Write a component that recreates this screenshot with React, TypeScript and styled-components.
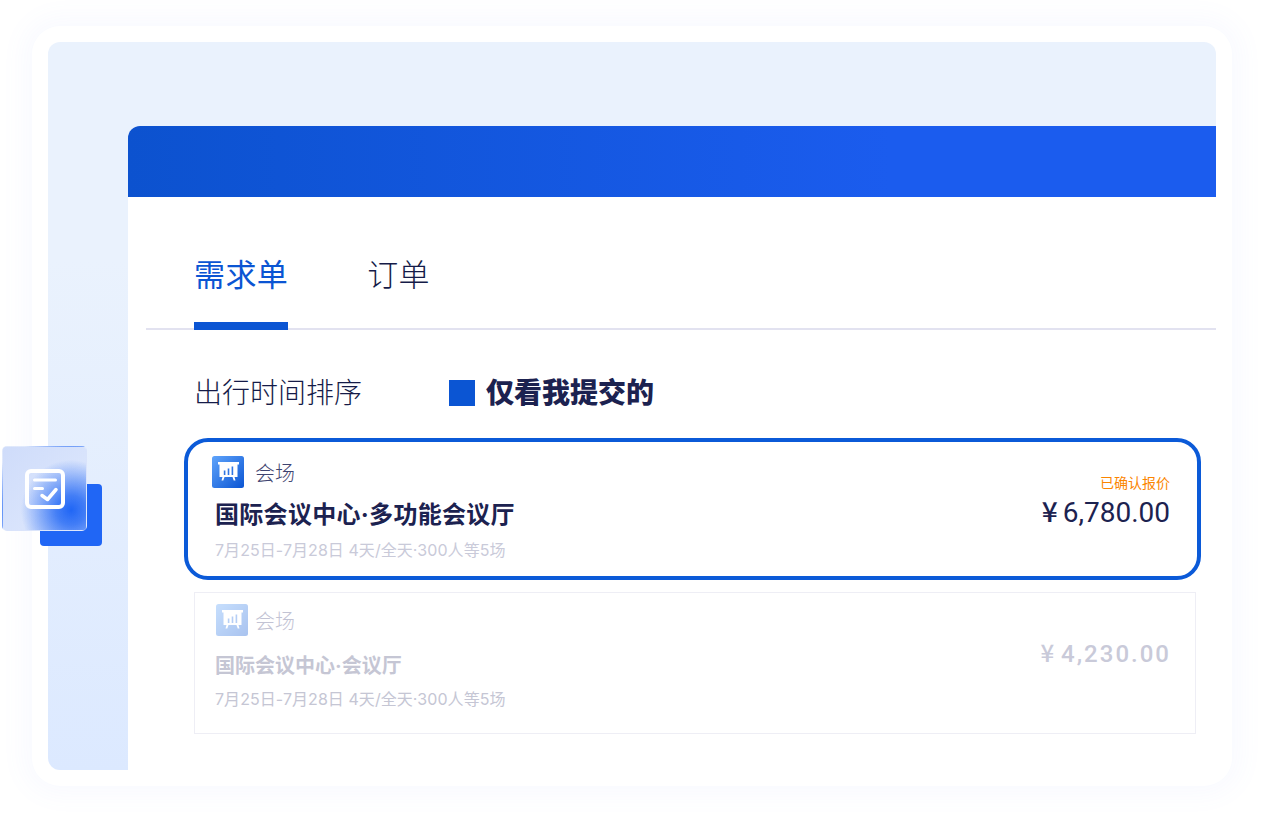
import React from "react";
import styled, { createGlobalStyle } from "styled-components";

const GlobalStyle = createGlobalStyle`
  html, body {
    margin: 0;
    padding: 0;
    background: #fff;
  }
  body {
    font-family: "Inter", "Noto Sans CJK SC", sans-serif;
    color: #1c2250;
  }
  * {
    box-sizing: border-box;
  }
`;

const VenueIcon = ({ id }: { id: string }) => (
  <svg width="32" height="32" viewBox="0 0 32 32">
    <defs>
      <linearGradient id={id} x1="0" y1="0" x2="1" y2="1">
        <stop offset="0" stopColor="#5fa4fb" />
        <stop offset="1" stopColor="#0b55d3" />
      </linearGradient>
    </defs>
    <rect width="32" height="32" rx="2.500" fill={`url(#${id})`} />
    <path d="M6 6h21v2.500h-1.500V21h-18V8.500H6z" fill="#fff" />
    <path d="M10.500 21l-1 3.500h1.800l1.200-3.500zM22.500 21l1 3.500h-1.800L20.500 21z" fill="#fff" />
    <path d="M11.800 14.500h1.600v4.500h-1.600zM15.700 12.500h1.600V19h-1.600zM19.600 10.500h1.600V19h-1.600z" fill="#2f76e3" />
  </svg>
);

const Page = () => (
  <Stage>
    <Card>
      <Panel>
        <Sheet>
          <Banner />
          <TabBar>
            <Tab $active>需求单</Tab>
            <Tab>订单</Tab>
          </TabBar>
          <FilterRow>
            <SortLabel>出行时间排序</SortLabel>
            <CheckBox />
            <CheckLabel>仅看我提交的</CheckLabel>
          </FilterRow>
          <SelectedItem>
            <ItemInfo>
              <ItemType>
                <VenueIcon id="venue-a" />
                <TypeName>会场</TypeName>
              </ItemType>
              <ItemTitle>国际会议中心·多功能会议厅</ItemTitle>
              <ItemMeta>7月25日-7月28日 4天/全天·300人等5场</ItemMeta>
            </ItemInfo>
            <PriceBox>
              <PriceNote>已确认报价</PriceNote>
              <Price>
                <Yen>¥</Yen>6,780.00
              </Price>
            </PriceBox>
          </SelectedItem>
          <MutedItem>
            <ItemInfo>
              <MutedType>
                <MutedIcon>
                  <VenueIcon id="venue-b" />
                </MutedIcon>
                <TypeName>会场</TypeName>
              </MutedType>
              <MutedTitle>国际会议中心·会议厅</MutedTitle>
              <MutedMeta>7月25日-7月28日 4天/全天·300人等5场</MutedMeta>
            </ItemInfo>
            <MutedPrice>
              <Yen>¥</Yen>4,230.00
            </MutedPrice>
          </MutedItem>
        </Sheet>
      </Panel>
    </Card>
    <FloatBadge>
      <BadgeBack />
      <BadgeGlass>
        <svg width="40" height="40" viewBox="0 0 40 40" fill="none">
          <rect x="2" y="2" width="36" height="36" rx="4" stroke="#fff" strokeWidth="4" />
          <path d="M9.500 11h21M9.500 19.500h8" stroke="#fff" strokeWidth="3" strokeLinecap="round" />
          <path d="M17 26.500l5.500 4L31 20.500" stroke="#fff" strokeWidth="3.500" strokeLinecap="round" strokeLinejoin="round" />
        </svg>
      </BadgeGlass>
    </FloatBadge>
  </Stage>
);

const App = () => (
  <>
    <GlobalStyle />
    <Page />
  </>
);

export default App;

const Stage = styled.div`
  position: relative;
  width: 1262px;
  height: 820px;
  padding: 26px 30px 34px 32px;
  overflow: hidden;
`;

const Card = styled.div`
  width: 1200px;
  height: 760px;
  padding: 16px;
  background: #fff;
  border-radius: 28px;
  box-shadow: 0 0 24px 10px rgba(120, 130, 255, 0.045);
`;

const Panel = styled.div`
  height: 728px;
  padding: 84px 0 0 80px;
  border-radius: 12px 12px 0 12px;
  background: linear-gradient(180deg, #eaf2fd 0%, #eaf2fd 30%, #dce9ff 100%);
`;

const Sheet = styled.div`
  height: 644px;
  background: #fff;
  border-top-left-radius: 12px;
  overflow: hidden;
`;

const Banner = styled.div`
  height: 71px;
  background: linear-gradient(90deg, #0c52cf 0%, #1b5cee 70%);
`;

const TabBar = styled.div`
  display: flex;
  align-items: flex-end;
  gap: 79px;
  height: 133px;
  margin-left: 18px;
  padding-left: 48px;
  border-bottom: 2px solid #e2e2f0;
`;

const Tab = styled.div<{ $active?: boolean }>`
  height: 78px;
  margin-bottom: -2px;
  font-size: 31px;
  line-height: 46px;
  font-weight: ${(p) => (p.$active ? 400 : 300)};
  letter-spacing: 0.4px;
  color: ${(p) => (p.$active ? "#0b55d3" : "#151b48")};
  border-bottom: 8px solid ${(p) => (p.$active ? "#0b55d3" : "transparent")};
`;

const FilterRow = styled.div`
  display: flex;
  align-items: center;
  height: 38px;
  margin: 44px 0 0 66px;
`;

const SortLabel = styled.div`
  width: 255px;
  font-size: 28px;
  line-height: 38px;
  font-weight: 300;
  color: #151b48;
`;

const CheckBox = styled.div`
  width: 26px;
  height: 26px;
  margin-right: 11px;
  background: #0b55d3;
`;

const CheckLabel = styled.div`
  font-size: 28px;
  line-height: 38px;
  font-weight: 900;
`;

const SelectedItem = styled.div`
  display: flex;
  justify-content: space-between;
  width: 1017px;
  height: 142px;
  margin: 26px 0 0 56px;
  padding: 14px 27px 0 24px;
  border: 4px solid #0b5ad8;
  border-radius: 24px;
`;

const MutedItem = styled.div`
  display: flex;
  justify-content: space-between;
  width: 1002px;
  height: 142px;
  margin: 12px 0 0 66px;
  padding: 11px 25px 0 21px;
  border: 1px solid #eeeef5;
`;

const ItemInfo = styled.div`
  display: flex;
  flex-direction: column;
`;

const ItemType = styled.div`
  display: flex;
  align-items: center;
  gap: 11px;
  height: 32px;
`;

const MutedType = styled(ItemType)`
  gap: 7px;
`;

const MutedIcon = styled.div`
  display: flex;
  opacity: 0.35;
`;

const TypeName = styled.span`
  font-size: 20px;
  font-weight: 300;
  color: #3f4470;
  ${MutedItem} & {
    color: #c2c3d4;
  }
`;

const ItemTitle = styled.div`
  margin: 9px 0 0 3px;
  font-size: 24px;
  line-height: 36px;
  font-weight: 700;
  letter-spacing: 0.3px;
`;

const MutedTitle = styled.div`
  margin: 12px 0 0 -1px;
  font-size: 20px;
  line-height: 36px;
  font-weight: 700;
  color: #c5c6d4;
`;

const ItemMeta = styled.div`
  margin: 5px 0 0 3px;
  font-size: 16px;
  line-height: 24px;
  letter-spacing: 0.06px;
  color: #c9cad9;
`;

const MutedMeta = styled(ItemMeta)`
  margin: 3px 0 0 -1px;
  color: #c5c6d4;
`;

const PriceBox = styled.div`
  display: flex;
  flex-direction: column;
  align-items: flex-end;
  padding-top: 17px;
`;

const PriceNote = styled.div`
  font-size: 14px;
  line-height: 20px;
  color: #fb8500;
`;

const Price = styled.div`
  margin-top: -2px;
  font-family: "Roboto", "Noto Sans CJK SC", sans-serif;
  font-size: 28px;
  line-height: 38px;
  font-weight: 400;
`;

const Yen = styled.span`
  margin-right: 5px;
  font-family: "Noto Sans CJK SC", sans-serif;
  font-weight: 500;
`;

const MutedPrice = styled.div`
  margin: 31px -1px 0 0;
  font-family: "Roboto", "Noto Sans CJK SC", sans-serif;
  font-size: 24px;
  line-height: 34px;
  font-weight: 500;
  letter-spacing: 2px;
  color: #c9cad9;
`;

const FloatBadge = styled.div`
  position: absolute;
  left: 2px;
  top: 446px;
  width: 100px;
  height: 100px;
`;

const BadgeBack = styled.div`
  position: absolute;
  left: 38px;
  top: 38px;
  width: 62px;
  height: 62px;
  border-radius: 4px;
  background: #2066f5;
`;

const BadgeGlass = styled.div`
  position: absolute;
  left: 0;
  top: 0;
  display: flex;
  align-items: center;
  justify-content: center;
  width: 85px;
  height: 85px;
  padding: 0 0 0 1px;
  border-radius: 5px;
  border: 1px solid rgba(255, 255, 255, 0.2);
  background:
    radial-gradient(circle at 82% 76%, #2066f5 0%, rgba(32, 102, 245, 0.8) 16%, rgba(90, 140, 245, 0) 54%),
    linear-gradient(135deg, #cfdcfa 0%, #d9e4fc 60%, #c6d7fb 100%);
`;
